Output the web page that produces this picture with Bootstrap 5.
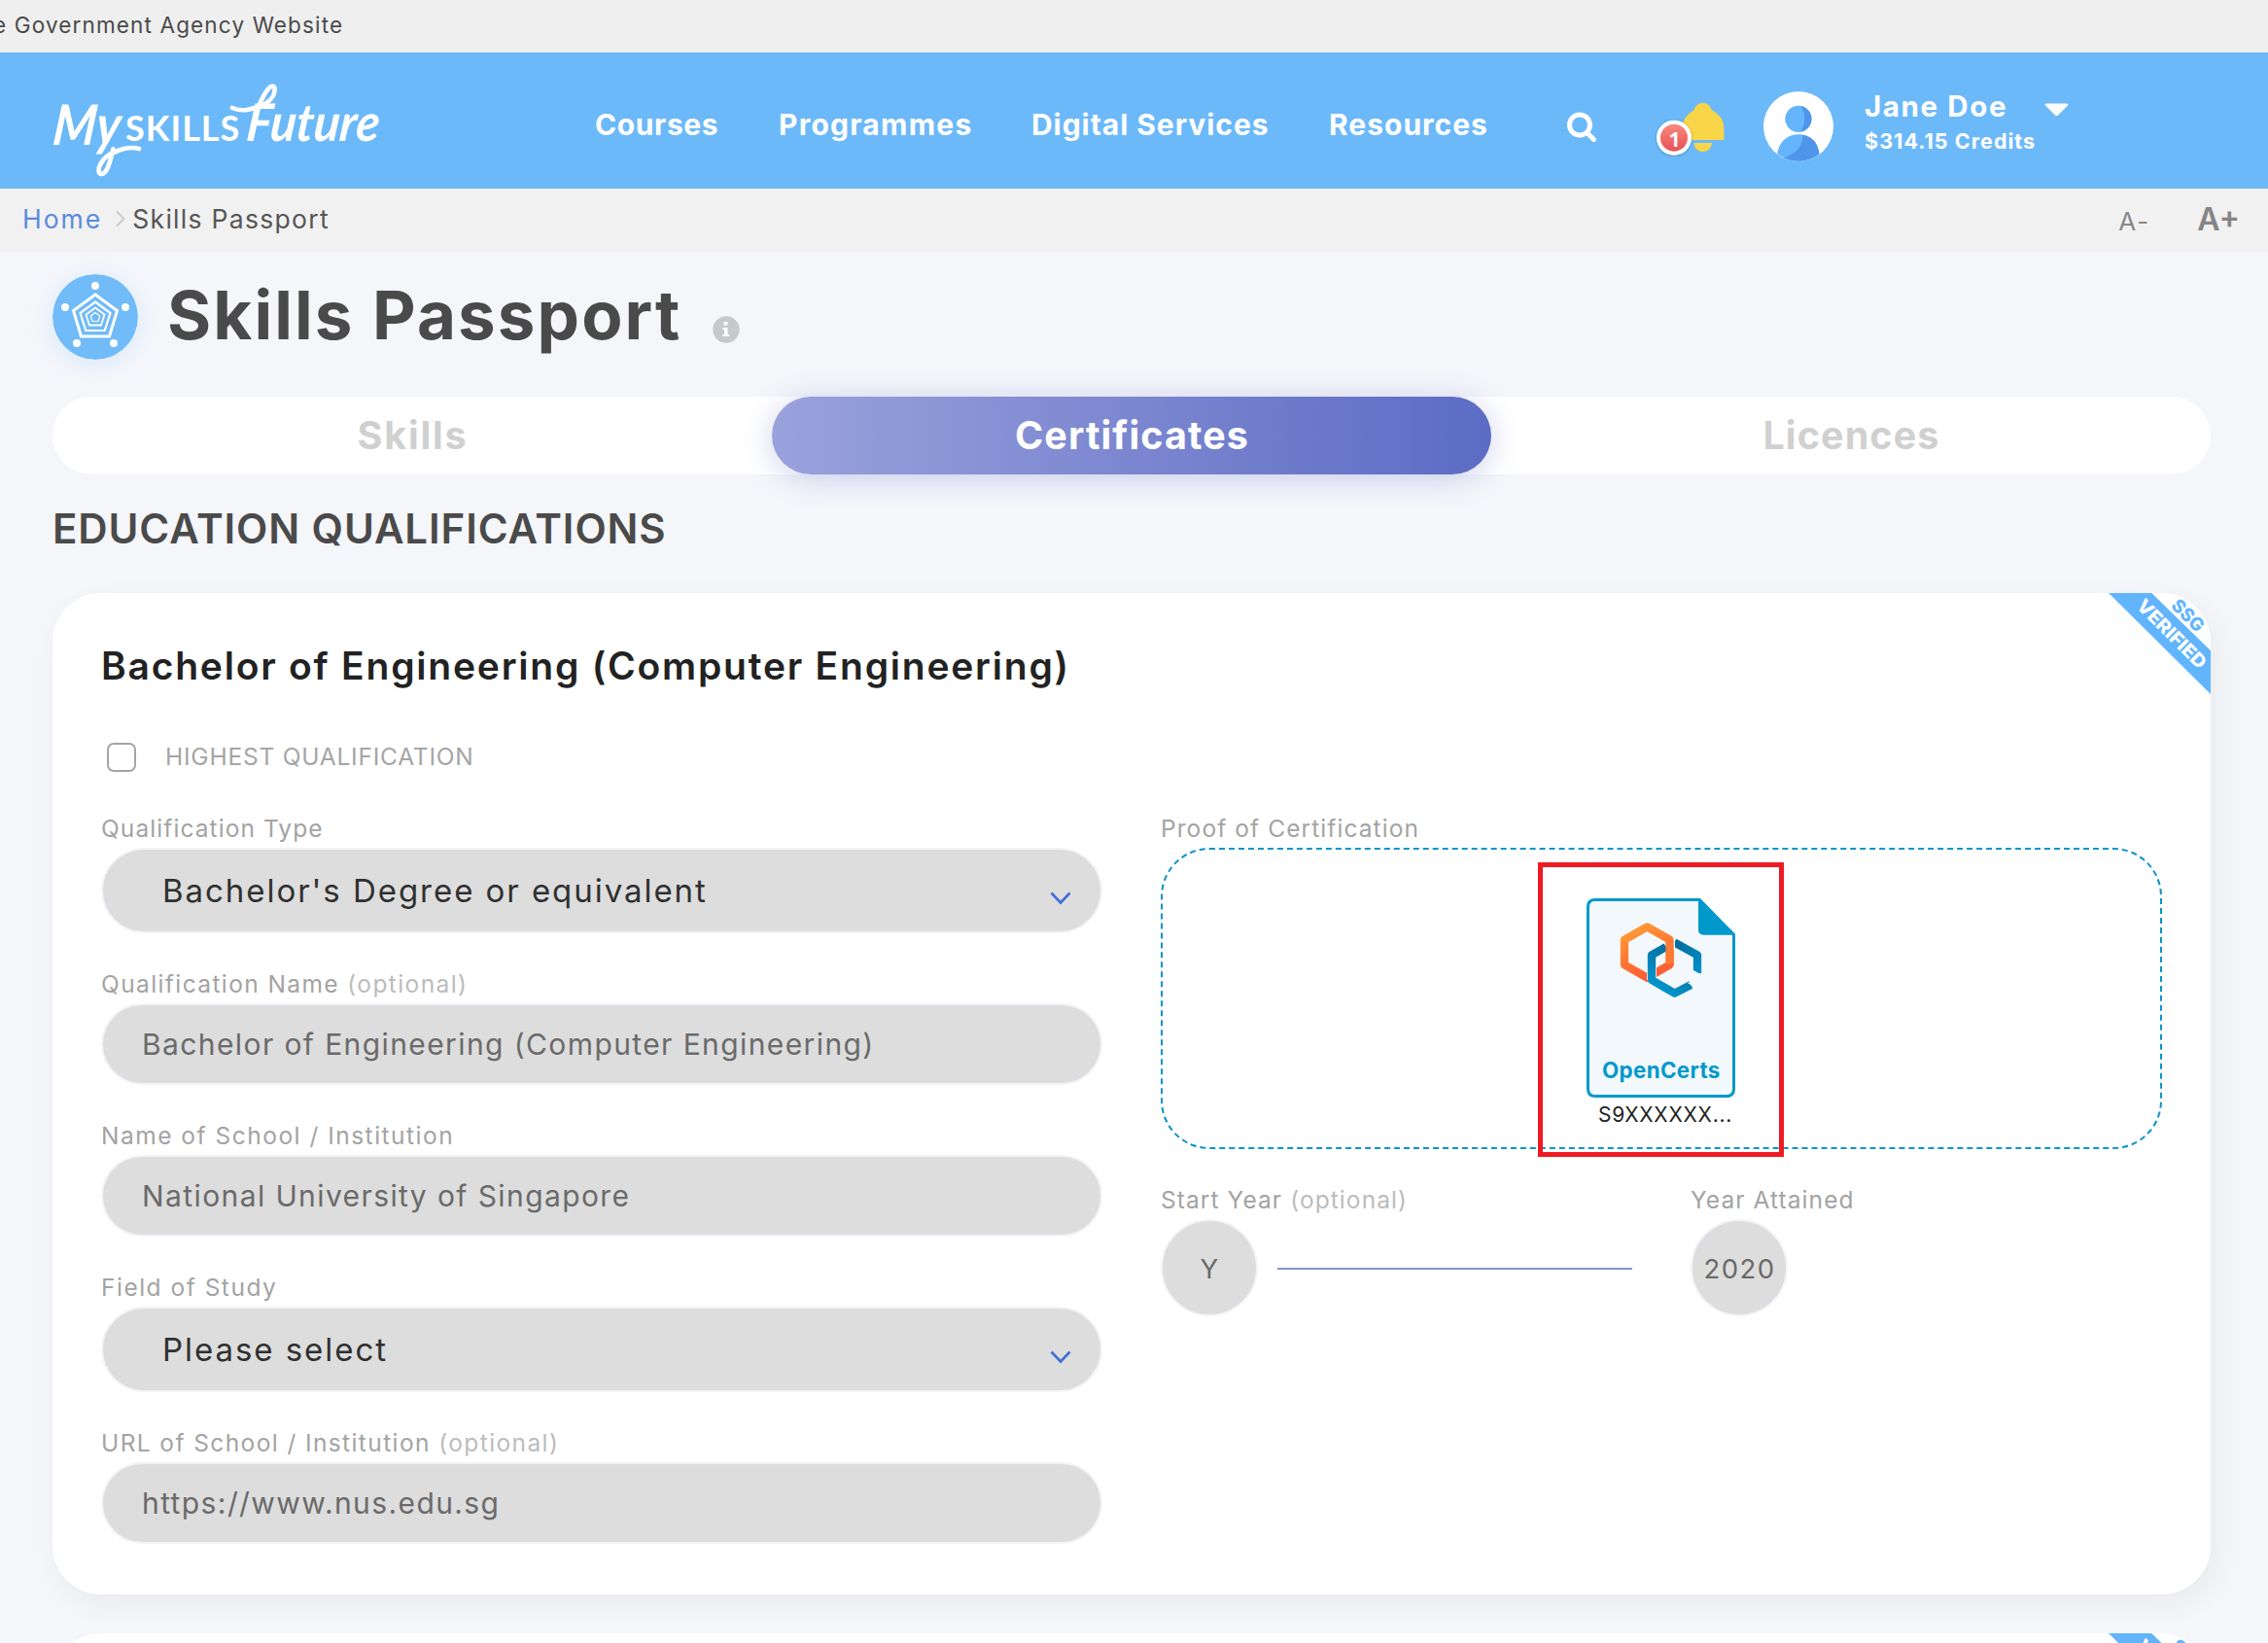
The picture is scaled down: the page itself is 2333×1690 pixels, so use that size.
<!DOCTYPE html>
<html lang="en">
<head>
<meta charset="utf-8">
<title>Skills Passport</title>
<link href="https://cdn.jsdelivr.net/npm/bootstrap@5.3.0/dist/css/bootstrap.min.css" rel="stylesheet">
<style>
  body { font-family: Inter, "Liberation Sans", sans-serif; background: #f5f6fa; color: #4a4a4a; font-kerning: normal; }
  svg { display: block; flex: none; }

  .agency-bar { height: 54px; background: #efefef; font-size: 22.5px; line-height: 52px; letter-spacing: 1.15px; }
  .agency-bar span { margin-left: -7px; }

  .site-header { height: 140px; background: #6cb9f9; color: #fff; font-weight: 700; }
  .brand-logo { margin: 24px 0 0 45px; }
  .main-nav { display: grid; grid-template-columns: 189px 260px 306px 243px; margin: 54px 0 0 207px; line-height: 40px; font-size: 30px; }
  .main-nav a { color: #fff; text-decoration: none; padding: 0; }
  .sp-a { letter-spacing: .6px; } .sp-b { letter-spacing: 1.25px; } .sp-c { letter-spacing: .95px; } .sp-d { letter-spacing: 1px; }
  .ic-search { margin-top: 60px; }
  .ic-bell { margin: 50px 0 0 58px; }
  .ic-avatar { margin: 40px 0 0 38px; }
  .user-box { margin: 38px 0 0 32px; width: 185px; white-space: nowrap; }
  .user-name { font-size: 29.5px; line-height: 35px; letter-spacing: 1.6px; }
  .user-credit { font-size: 21.5px; line-height: 36px; letter-spacing: 1.05px; }
  .ic-caret { margin-top: 52px; }

  .crumb-bar { height: 65px; background: #f1f1f1; font-size: 26.5px; line-height: 62px; padding: 0 29px 0 23px; }
  .crumb-bar a { color: #5a8ade; text-decoration: none; letter-spacing: 2px; }
  .crumb-sep { margin: 22px 6px 0 13px; }
  .crumb-here { letter-spacing: 1.3px; color: #555; }
  .size-minus { color: #888; font-size: 26px; letter-spacing: 2px; line-height: 68px; margin-right: 48px; }
  .size-plus { color: #858585; font-size: 32px; font-weight: 600; line-height: 63px; letter-spacing: 0; }

  .page-main { padding: 23px 59px 0 54px; height: 1431px; overflow: hidden; }
  .title-icon { border-radius: 50%; box-shadow: 0 4px 26px rgba(108,185,249,.22); }
  .page-title { font-size: 69px; line-height: 84px; padding-bottom: 4px; font-weight: 700; letter-spacing: 2.1px; margin: 0 0 0 30px; color: #4a4a4a; white-space: nowrap; width: 545px; }
  .ic-info { margin: 25px 0 0 16px; }

  .pass-tabs { height: 80px; margin-top: 38px; background: #fff; border-radius: 40px; font-size: 39.5px; font-weight: 700; flex-wrap: nowrap; }
  .pass-tabs .nav-link { color: #d0d0d0; line-height: 80px; padding: 0 0 0 1px; border-radius: 40px; letter-spacing: 1.1px; flex: 1 1 0; }
  .pass-tabs .nav-link:first-child { letter-spacing: 1.8px; }
  .pass-tabs .nav-link.active { color: #fff; background: linear-gradient(90deg, #9aa2dc, #5c6bc4); box-shadow: 0 4px 30px rgba(92,107,196,.3); }

  .section-title { font-size: 42px; line-height: 50px; font-weight: 600; letter-spacing: .9px; margin: 31px 0 41px 0; }

  .qual-card { border: 0; border-radius: 50px; background: #fff; overflow: hidden; height: 1030px; padding: 35px 50px 52px; margin-bottom: 40px; }
  .card-shade { border-radius: 50px; box-shadow: 6px 10px 30px rgba(0,0,0,.05); }
  .ribbon { position: absolute; top: 0; right: 0; }
  .qual-title { font-size: 39px; line-height: 80px; font-weight: 600; letter-spacing: 1.78px; color: #222; margin: 0; padding-bottom: 2px; }
  .check-row { height: 40px; margin: 32px 0 33px; }
  .check-row .form-check-input { width: 30px; height: 30px; margin: 0 0 0 6px; border: 2px solid #a5a5a5; border-radius: 7px; background: #fff; box-shadow: none; }
  .check-row label { font-size: 24.5px; letter-spacing: .78px; color: #a5a5a5; margin-left: 30px; line-height: 39px; height: 40px; }

  .cols { gap: 60px; }
  .cols > div { flex: 1 1 0; }
  .f-label { display: block; font-size: 24.5px; height: 40px; line-height: 41px; letter-spacing: 1.4px; color: #a3a3a3; white-space: nowrap; }
  .f-label small { font-size: inherit; color: #bcbcbc; }
  .f-tight { letter-spacing: 1.08px; }
  .f-wide { letter-spacing: 1.5px; }
  .f-field + .f-field { margin-top: 32px; }
  .f-input, .f-select { background: #ddd; border: 2px solid #f3f4fa; border-radius: 44px; }
  .f-input { height: 84px; line-height: 81px; padding: 0 40px 0 40px; font-size: 30px; letter-spacing: 1.4px; color: #6a6a6a; }
  .f-select { height: 88px; line-height: 88px; padding: 0 30px 0 61px; font-size: 33px; letter-spacing: 1.95px; color: #303030; }
  .f-select svg { margin-top: 16px; }

  .drop-zone { height: 310px; border: 2px dashed #0a94cb; border-radius: 50px; padding-top: 50px; }
  .drop-zone > svg { margin-right: 2px; }
  .file-name { font-size: 21px; letter-spacing: .75px; line-height: 35px; color: #222; margin-left: 8px; }
  .red-frame { position: absolute; left: 386px; top: 13px; width: 253px; height: 303px; border: 5px solid #ef1b23; }
  .year-dot { width: 100px; height: 100px; border: 2px solid #f3f4fa; border-radius: 50%; background: #ddd; font-size: 27.5px; letter-spacing: 1.5px; color: #6a6a6a; flex: none; padding-top: 3px; padding-left: 1px; }
  .year-line { height: 2px; background: #8793d8; flex: 1; margin: 2px 0 0 20px; }
</style>
</head>
<body>
<div class="agency-bar text-nowrap"><span>e Government Agency Website</span></div>

<header class="site-header d-flex align-items-start">
  <svg class="brand-logo" width="360" height="112" viewBox="0 0 1080 336" fill="#fff" font-family="Lato, sans-serif" role="img" aria-label="MySkillsFuture">
    <text x="0" y="0" font-size="172" font-weight="700" font-style="italic" textLength="208" lengthAdjust="spacingAndGlyphs" transform="translate(24 214) skewX(-6)">My</text>
    <path d="M222 234Q262 216 294 225" fill="none" stroke="#fff" stroke-width="14" stroke-linecap="round"/>
    <path d="M214 226C206 262 196 303 178 303C158 300 174 250 222 234" fill="none" stroke="#fff" stroke-width="14" stroke-linecap="round"/>
    <text x="252" y="200" font-size="108" font-weight="700" textLength="352" lengthAdjust="spacing">SKILLS</text>
    <path d="M582 99C610 112 645 104 664 92C690 30 708 24 713 38C714 62 696 84 662 96" fill="none" stroke="#fff" stroke-width="14" stroke-linecap="round"/>
    <text x="0" y="0" font-size="160" font-weight="700" font-style="italic" textLength="410" lengthAdjust="spacingAndGlyphs" transform="translate(622 200) skewX(-6)">Future</text>
  </svg>
  <nav class="main-nav">
    <a class="sp-a" href="#">Courses</a><a class="sp-b" href="#">Programmes</a><a class="sp-c" href="#">Digital Services</a><a class="sp-d" href="#">Resources</a>
  </nav>
  <svg class="ic-search" width="34" height="34" viewBox="0 0 34 34" fill="none" stroke="#fff" stroke-linecap="round"><circle cx="15" cy="14.500" r="10.500" stroke-width="5"/><path d="M23 23l6.500 6.500" stroke-width="5"/></svg>
  <svg class="ic-bell" width="74" height="57" viewBox="36 54 222 171">
    <defs>
      <linearGradient id="badgeFill" x1="0" y1="0" x2="0" y2="1"><stop offset="0" stop-color="#f98a80"/><stop offset="1" stop-color="#e84f55"/></linearGradient>
      <filter id="badgeShade" x="-20%" y="-20%" width="140%" height="140%"><feDropShadow dx="0" dy="2" stdDeviation="4" flood-opacity=".3"/></filter>
    </defs>
    <path d="M158 82C162 66 172 60 185 60S208 66 212 82C236 94 250 112 250 138V174H122V138C122 112 136 94 158 82ZM157 183H213C210 202 200 210 185 210S160 202 157 183Z" fill="#f9d548"/>
    <circle cx="96" cy="167" r="54" fill="#fff" filter="url(#badgeShade)"/><circle cx="96" cy="167" r="42" fill="url(#badgeFill)"/>
    <text x="98" y="196" font-size="62" font-weight="700" text-anchor="middle" fill="#fff" font-family="Open Sans, sans-serif">1</text>
  </svg>
  <svg class="ic-avatar" width="72" height="72" viewBox="372 23 216 216">
    <clipPath id="avatarClip"><circle cx="480" cy="131" r="107"/></clipPath>
    <circle cx="480" cy="131" r="108" fill="#fff"/>
    <g clip-path="url(#avatarClip)">
      <circle cx="480" cy="108" r="41" fill="#64b5fd"/><path d="M488 68A41 41 0 0 1 488 148Q510 108 488 68Z" fill="#4f95ea"/>
      <path d="M412 240C412 185 440 156 480 156S546 185 546 240Z" fill="#64b5fd"/><path d="M492 157C530 162 546 190 546 240H430L436 228C475 215 495 190 492 157Z" fill="#4f95ea"/>
    </g>
  </svg>
  <div class="user-box"><div class="user-name">Jane Doe</div><div class="user-credit">$314.15 Credits</div></div>
  <svg class="ic-caret" width="25" height="14" viewBox="0 0 25 14"><path d="M2 .5H23Q25.500 1 23.500 3L14 12.500Q12.500 14 11 12.500L1.500 3Q-.5 1 2 .5Z" fill="#fff"/></svg>
</header>

<div class="crumb-bar d-flex align-items-start">
  <a href="#">Home</a>
  <svg class="crumb-sep" width="12" height="18" viewBox="0 0 12 18"><path d="M2 1.500L9.500 9L2 16.500" fill="none" stroke="#ccc" stroke-width="2"/></svg>
  <span class="crumb-here">Skills Passport</span>
  <span class="size-minus ms-auto">A-</span><span class="size-plus">A+</span>
</div>

<main class="page-main">
  <div class="d-flex align-items-center">
    <svg class="title-icon" width="88" height="88" viewBox="-44 -44 88 88">
      <circle r="44" fill="#70bbf8"/>
      <g fill="#fff"><circle cy="-32" r="4"/><circle cx="-31" cy="-10" r="4"/><circle cx="31" cy="-10" r="4"/><circle cx="-19" cy="27" r="4"/><circle cx="19" cy="27" r="4"/></g>
      <g fill="none" stroke="#fff"><path d="M0-23L22.500-6.500L14.500 20H-14.500L-22.500-6.500Z" stroke-width="3"/><path d="M0-15.500L15.500-4L9.700 14H-9.700L-15.500-4Z" stroke-width="2.200"/><path d="M0-9.500L9.500-2.500L6 8.500H-6L-9.500-2.500Z" stroke-width="1.800"/><path d="M0-4.500L4.800-1L3 4.500H-3L-4.800-1Z" stroke-width="1.200"/></g>
    </svg>
    <h1 class="page-title">Skills Passport</h1>
    <svg class="ic-info" width="28" height="28" viewBox="0 0 28 28"><circle cx="14" cy="14" r="13.700" fill="#c7c8cb"/><path d="M11.500 6h4v3.500h-4zM10.500 12h5v7h1.700v2h-6.700v-2h1.600v-5h-1.600z" fill="#fff"/></svg>
  </div>

  <nav class="pass-tabs nav nav-pills text-center">
    <a class="nav-link" href="#">Skills</a><a class="nav-link active" href="#">Certificates</a><a class="nav-link" href="#">Licences</a>
  </nav>

  <h2 class="section-title">EDUCATION QUALIFICATIONS</h2>

  <div class="card-shade">
  <section class="qual-card card">
    <svg class="ribbon" width="105" height="105" viewBox="207 90 315 315">
      <g id="ribbonArt"><path d="M207 90H340L522 268V402Z" fill="#62b5fd"/>
      <g font-family="Inter, sans-serif" font-weight="800" text-anchor="middle">
        <text transform="translate(402 216) rotate(45)" y="20" font-size="57" textLength="276" lengthAdjust="spacingAndGlyphs" fill="#fff">VERIFIED</text>
        <text transform="translate(452 159) rotate(45)" y="20" font-size="57" textLength="116" lengthAdjust="spacingAndGlyphs" fill="#62b5fd">SSG</text>
      </g></g>
    </svg>
    <h3 class="qual-title">Bachelor of Engineering (Computer Engineering)</h3>
    <div class="check-row d-flex align-items-center"><input class="form-check-input" type="checkbox" id="highest"><label for="highest">HIGHEST QUALIFICATION</label></div>
    <div class="cols d-flex">
      <div>
        <div class="f-field"><span class="f-label f-tight">Qualification Type</span><div class="f-select d-flex justify-content-between align-items-center"><span>Bachelor's Degree or equivalent</span><svg width="22" height="14" viewBox="0 0 22 14"><path d="M1.500 1.500L11 11.500L20.500 1.500" fill="none" stroke="#3c6fd8" stroke-width="2.600"/></svg></div></div>
        <div class="f-field"><span class="f-label">Qualification Name <small>(optional)</small></span><div class="f-input">Bachelor of Engineering (Computer Engineering)</div></div>
        <div class="f-field"><span class="f-label f-wide">Name of School / Institution</span><div class="f-input">National University of Singapore</div></div>
        <div class="f-field"><span class="f-label f-wide">Field of Study</span><div class="f-select d-flex justify-content-between align-items-center"><span>Please select</span><svg width="22" height="14" viewBox="0 0 22 14"><path d="M1.500 1.500L11 11.500L20.500 1.500" fill="none" stroke="#3c6fd8" stroke-width="2.600"/></svg></div></div>
        <div class="f-field"><span class="f-label">URL of School / Institution <small>(optional)</small></span><div class="f-input">https://www.nus.edu.sg</div></div>
      </div>
      <div>
        <div class="f-field"><span class="f-label f-tight">Proof of Certification</span>
          <div class="drop-zone position-relative d-flex flex-column align-items-center">
            <svg width="153" height="205" viewBox="216 192 459 615">
              <defs>
                <linearGradient id="og" x1="0" y1="0" x2=".4" y2="1"><stop offset="0" stop-color="#ff9f35"/><stop offset="1" stop-color="#ff5e34"/></linearGradient>
                <linearGradient id="bl" x1=".6" y1="0" x2="0" y2="1"><stop offset="0" stop-color="#036a9c"/><stop offset="1" stop-color="#009dd3"/></linearGradient>
                <linearGradient id="bl2" x1="0" y1="0" x2="1" y2="1"><stop offset="0" stop-color="#036a9c"/><stop offset="1" stop-color="#008fc6"/></linearGradient>
              </defs>
              <path d="M242 196.500H565L670.500 304V780Q670.500 802.500 648 802.500H243Q220.500 802.500 220.500 780V218Q220.500 196.500 242 196.500Z" fill="#f2f8fb" stroke="#09c" stroke-width="9"/>
              <path d="M561 192L675 305H577Q561 305 561 289Z" fill="#09c"/>
              <g fill="none" stroke-width="25" stroke-linejoin="round">
                <path d="M403 280L473 320V397L403 437L333 397V320Z" stroke="url(#og)"/>
                <path d="M417 444V395" stroke="#f2f8fb" stroke-width="30"/>
                <path d="M538 459L488 485L417 444V367L461 342" stroke="url(#bl)"/>
                <path d="M487 328L558 367V424" stroke="url(#bl2)"/>
                <path d="M473 322V395" stroke="#ff7a34"/>
                <path d="M487 308V350" stroke="#f2f8fb" stroke-width="4"/>
              </g>
              <path d="M545 413L572 429V440H540Z" fill="#f2f8fb"/>
              <path d="M526 452L552 467L548 480L560 450Z" fill="#f2f8fb"/>
              <text x="446" y="746" text-anchor="middle" font-family="Inter, sans-serif" font-size="67" font-weight="700" textLength="364" fill="#09c">OpenCerts</text>
            </svg>
            <span class="file-name">S9XXXXXX...</span>
            <div class="red-frame"></div>
          </div>
        </div>
        <div class="cols d-flex f-field">
          <div><span class="f-label f-tight">Start Year <small>(optional)</small></span>
            <div class="d-flex align-items-center"><div class="year-dot d-flex align-items-center justify-content-center">Y</div><div class="year-line"></div></div></div>
          <div><span class="f-label f-tight">Year Attained</span>
            <div class="year-dot d-flex align-items-center justify-content-center">2020</div></div>
        </div>
      </div>
    </div>
  </section>
  </div>
  <section class="qual-card card"><svg class="ribbon" width="105" height="105" viewBox="207 90 315 315"><use href="#ribbonArt"/></svg></section>
</main>
<script src="https://cdn.jsdelivr.net/npm/bootstrap@5.3.0/dist/js/bootstrap.bundle.min.js"></script>
</body>
</html>
